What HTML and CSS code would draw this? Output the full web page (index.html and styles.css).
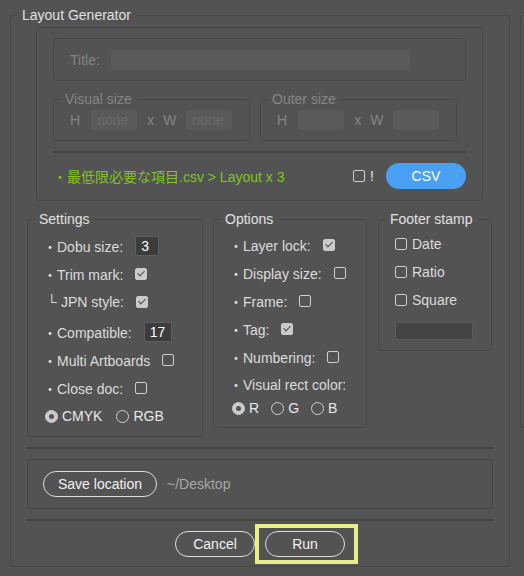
FILE: index.html
```html
<!DOCTYPE html>
<html lang="ja">
<head>
<meta charset="utf-8">
<title>Layout Generator</title>
<link rel="stylesheet" href="styles.css">
</head>
<body>
<fieldset class="panel main">
  <legend class="legend">Layout Generator</legend>
  <div class="main-body">
    <div class="top-box">
      <div class="title-panel">
        <span class="dim">Title:</span>
        <span class="field dis title-field"></span>
      </div>
      <div class="size-row">
        <fieldset class="panel size-group">
          <legend class="legend dim">Visual size</legend>
          <div class="size-line">
            <span class="dim h">H</span><span class="field dis size-field">none</span><span class="dim x">x</span><span class="dim w">W</span><span class="field dis size-field">none</span>
          </div>
        </fieldset>
        <fieldset class="panel size-group">
          <legend class="legend dim">Outer size</legend>
          <div class="size-line">
            <span class="dim h">H</span><span class="field dis size-field"></span><span class="dim x">x</span><span class="dim w">W</span><span class="field dis size-field"></span>
          </div>
        </fieldset>
      </div>
      <div class="sep"></div>
      <div class="csv-row">
        <span class="green">・最低限必要な項目.csv &gt; Layout x 3</span>
        <span class="cb"></span><span class="bang">!</span>
        <span class="csv-btn">CSV</span>
      </div>
    </div>

    <div class="groups">
      <fieldset class="panel settings">
        <legend class="legend">Settings</legend>
        <div class="gbody">
          <div class="row">・Dobu size:<span class="num">3</span></div>
          <div class="row">・Trim mark:<span class="cb on"></span></div>
          <div class="row"><span class="corner">└</span>JPN style:<span class="cb on"></span></div>
          <div class="row compat">・Compatible:<span class="num wide">17</span></div>
          <div class="row">・Multi Artboards<span class="cb"></span></div>
          <div class="row">・Close doc:<span class="cb"></span></div>
          <div class="row radio-row"><span class="rb on"></span><span class="rl">CMYK</span><span class="rb next"></span><span class="rl">RGB</span></div>
        </div>
      </fieldset>

      <fieldset class="panel options">
        <legend class="legend">Options</legend>
        <div class="gbody">
          <div class="row">・Layer lock:<span class="cb on"></span></div>
          <div class="row">・Display size:<span class="cb"></span></div>
          <div class="row">・Frame:<span class="cb"></span></div>
          <div class="row">・Tag:<span class="cb on"></span></div>
          <div class="row">・Numbering:<span class="cb"></span></div>
          <div class="row vrc">・Visual rect color:</div>
          <div class="row radio-row rgb"><span class="rb on"></span><span class="rl">R</span><span class="rb next"></span><span class="rl">G</span><span class="rb next"></span><span class="rl">B</span></div>
        </div>
      </fieldset>

      <fieldset class="panel footer">
        <legend class="legend">Footer stamp</legend>
        <div class="gbody fbody">
          <div class="row"><span class="cb"></span>Date</div>
          <div class="row"><span class="cb"></span>Ratio</div>
          <div class="row"><span class="cb"></span>Square</div>
          <div class="stamp-field"></div>
        </div>
      </fieldset>
    </div>

    <div class="sep"></div>

    <div class="save">
      <span class="btn save-btn">Save location</span>
      <span class="path">~/Desktop</span>
    </div>

    <div class="sep"></div>

    <div class="actions">
      <span class="btn cancel">Cancel</span>
      <span class="btn run">Run<span class="highlight"></span></span>
    </div>
  </div>
</fieldset>
<div class="side"></div>
</body>
</html>
```

FILE: styles.css
```css
* { box-sizing: border-box; }
html, body { margin: 0; padding: 0; }
body {
  width: 524px;
  height: 576px;
  overflow: hidden;
  background: #535353;
  font-family: "Liberation Sans", "Noto Sans CJK JP", sans-serif;
  font-size: 14px;
  color: #dcdcdc;
  display: flex;
  align-items: flex-start;
}

.panel {
  margin: 0;
  padding: 0;
  border: 1px solid #474747;
  border-radius: 4px;
  min-width: 0;
}
.legend {
  padding: 0 5px;
  margin-left: 6px;
  line-height: 17px;
  font-size: 14px;
  color: #e0e0e0;
}
.main { margin: 7px 0 0 10px; width: 500px; flex: none; }
.main-body { padding: 3px 16px 9px; }
.side {
  flex: none;
  margin: 15px 0 0 10px;
  width: 4px;
  height: 413px;
  border: 1px solid #474747;
  border-right: none;
  border-radius: 4px 0 0 4px;
}

/* top box */
.top-box {
  margin-left: 9px;
  width: 447px;
  border: 1px solid #474747;
  border-radius: 4px;
  padding: 10px 16px 11px;
}
.dim { color: #848484; }
.legend.dim { color: #858585; }
.field.dis { background: #5a5a5a; border-radius: 2px; }
.title-panel {
  display: flex;
  align-items: center;
  height: 43px;
  border: 1px solid #474747;
  border-radius: 4px;
  padding: 0 16px;
}
.title-field { width: 299px; height: 20px; margin-left: 11px; }
.size-row { display: flex; gap: 10px; margin-top: 10px; }
.size-group { width: 197px; }
.size-line { display: flex; align-items: center; padding: 2px 16px 10px; }
.size-line .h { margin-right: 11px; }
.size-field { width: 46px; height: 20px; line-height: 20px; padding-left: 6px; color: #6b6b6b; }
.size-line .x { margin: 0 9px 0 10px; }
.size-line .w { margin-right: 10px; }

.sep { height: 2px; background: #454545; margin-top: 10px; }

.csv-row { display: flex; align-items: center; height: 26px; margin-top: 10px; }
.green { color: #80c322; flex: 1; white-space: nowrap; }
.bang { margin-left: 5px; color: #e6e6e6; }
.csv-btn {
  margin-left: 12px;
  width: 80px;
  height: 26px;
  border-radius: 13px;
  background: #4aa0f2;
  color: #ffffff;
  display: flex;
  align-items: center;
  justify-content: center;
}

/* groups */
.groups { display: flex; align-items: flex-start; margin-top: 10px; }
.settings { width: 176px; }
.options { width: 154px; margin-left: 10px; }
.footer { width: 114px; margin-left: 11px; }
.gbody { padding: 4px 0 6px 15px; }
.options .gbody { padding: 3px 0 7px 15px; }
.fbody { padding: 2px 16px 10px 16px; }
.row { display: flex; align-items: center; height: 28px; white-space: nowrap; }
.row.compat { margin-top: 2px; }
.row.vrc { height: 25px; }
.row.rgb { height: 24px; }
.corner { margin: 0 4px 0 4px; }

.num {
  margin-left: 12px;
  width: 24px;
  height: 20px;
  background: #3c3c3c;
  border: 1px solid #5e5e5e;
  border-radius: 2px;
  color: #ffffff;
  padding-left: 5px;
  line-height: 18px;
}
.num.wide { width: 28px; }

.cb {
  flex: none;
  width: 12px;
  height: 12px;
  border: 1px solid #cfcfcf;
  border-radius: 2px;
  position: relative;
}
.row .cb { margin-left: 12px; }
.csv-row .cb { margin-left: 0; }
.fbody .row .cb { margin: 0 5px 0 0; }
.cb.on { background: #cbcbcb; border-color: #cbcbcb; }
.cb.on::after {
  content: "";
  position: absolute;
  left: 3px;
  top: 0px;
  width: 3px;
  height: 6px;
  border: solid #4e4e4e;
  border-width: 0 1.5px 1.5px 0;
  transform: rotate(45deg);
}

.rb {
  flex: none;
  width: 13px;
  height: 13px;
  border: 1px solid #cfcfcf;
  border-radius: 50%;
  margin-right: 4px;
  display: flex;
  align-items: center;
  justify-content: center;
}
.radio-row .rb:first-child { margin-left: 2px; }
.rgb .rb:first-child { margin-left: 3px; }
.rb.next { margin-left: 14px; }
.rgb .rb.next { margin-left: 12px; }
.rb.on { background: #cbcbcb; border-color: #cbcbcb; }
.rb.on::after { content: ""; width: 5px; height: 5px; border-radius: 50%; background: #555555; }
.rl { color: #e8e8e8; }

.stamp-field {
  margin-top: 8px;
  width: 78px;
  height: 18px;
  background: #444444;
  border: 1px solid #5a5a5a;
  border-radius: 2px;
}

/* bottom */
.save {
  margin-top: 10px;
  border: 1px solid #474747;
  border-radius: 4px;
  padding: 11px 15px;
  display: flex;
  align-items: center;
}
.btn {
  height: 26px;
  border: 1px solid #dedede;
  border-radius: 13px;
  color: #f2f2f2;
  display: flex;
  align-items: center;
  justify-content: center;
}
.save-btn { width: 114px; }
.path { margin-left: 10px; color: #a8a8a8; }
.actions { display: flex; justify-content: center; gap: 10px; margin-top: 10px; }
.cancel { width: 80px; }
.run { width: 80px; position: relative; }
.highlight {
  position: absolute;
  left: -11px;
  top: -8px;
  width: 103px;
  height: 40px;
  border: 4px solid #e6ef8c;
}
```
